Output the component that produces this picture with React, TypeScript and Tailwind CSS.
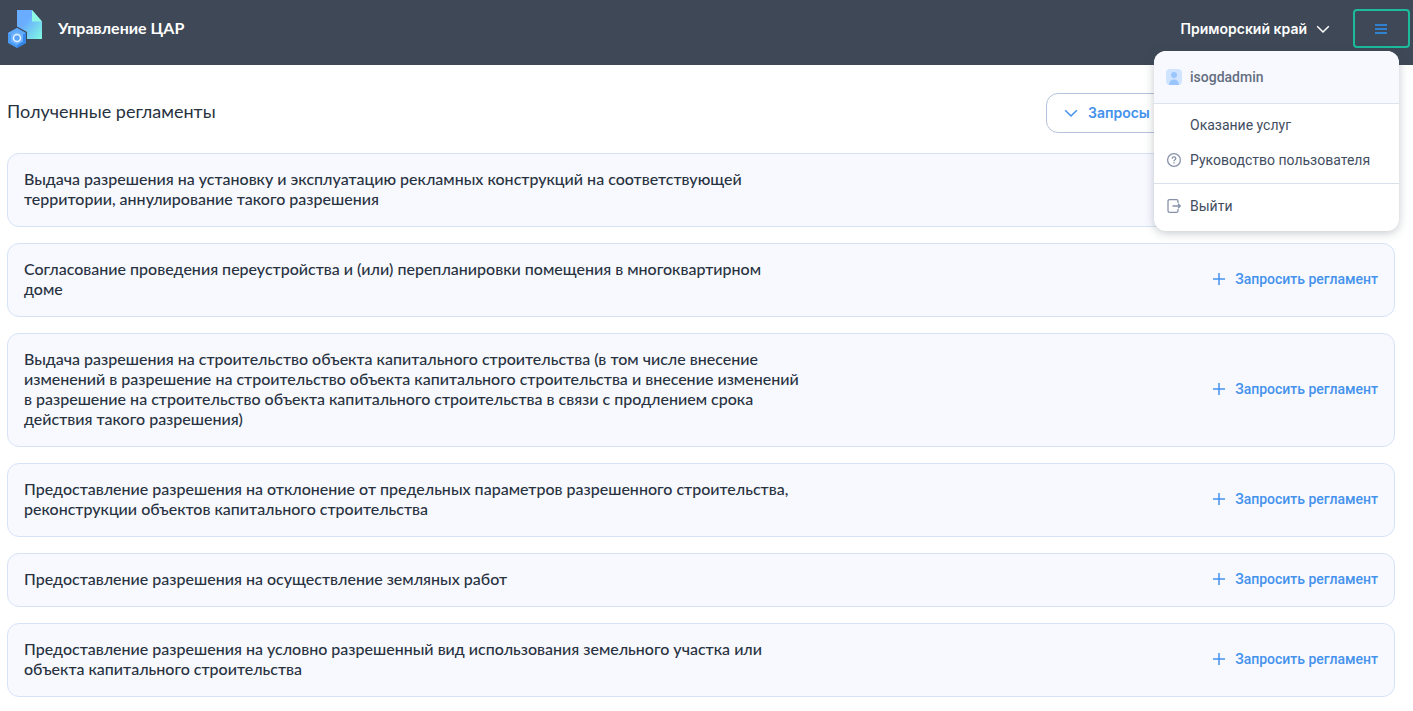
import React from 'react'

const regulations = [
    "Выдача разрешения на установку и эксплуатацию рекламных конструкций на соответствующей территории, аннулирование такого разрешения",
    "Согласование проведения переустройства и (или) перепланировки помещения в многоквартирном доме",
    "Выдача разрешения на строительство объекта капитального строительства (в том числе внесение изменений в разрешение на строительство объекта капитального строительства и внесение изменений в разрешение на строительство объекта капитального строительства в связи с продлением срока действия такого разрешения)",
    "Предоставление разрешения на отклонение от предельных параметров разрешенного строительства, реконструкции объектов капитального строительства",
    "Предоставление разрешения на осуществление земляных работ",
    "Предоставление разрешения на условно разрешенный вид использования земельного участка или объекта капитального строительства",
]

function Logo() {
    return (
        <svg width="36" height="40" viewBox="0 0 36 40" aria-hidden="true">
            <defs>
                <linearGradient id="doc" x1="0.35" y1="0.4" x2="1" y2="1">
                    <stop offset="0" stopColor="#6aacff" />
                    <stop offset="1" stopColor="#80fbe0" />
                </linearGradient>
            </defs>
            <path d="M9 2h15l10 11.500v17.500H9z" fill="url(#doc)" />
            <path d="M24 2l10 11.500H24z" fill="#8ff8e4" />
            <path d="M9 18.500l10 5.500v12l-10 3-10-5v-10z" fill="#3e4857" />
            <path d="M9 20l9 5v10l-9 5-9-5V25z" fill="#4a9bf5" />
            <path d="M9 20l9 5-9 5-9-5z" fill="#5fa9f8" />
            <path d="M9 30l9-5v10l-9 5z" fill="#3586e8" />
            <path d="M9 23l6 3.500v7L9 37l-6-3.500v-7z" fill="#6cb2ff" />
            <circle cx="9" cy="30" r="3.500" fill="#5aa5fa" stroke="#e8f4ff" strokeWidth="1.500" />
        </svg>
    )
}

function ChevronIcon() {
    return (
        <svg width="14" height="14" viewBox="0 0 14 14" fill="none" stroke="currentColor" strokeWidth="1.500" aria-hidden="true">
            <path d="M1.200 4.200L7 10l5.800-5.800" />
        </svg>
    )
}

function PlusIcon() {
    return (
        <svg width="12" height="12" viewBox="0 0 12 12" stroke="currentColor" strokeWidth="1.500" aria-hidden="true">
            <path d="M6 0v12M0 6h12" />
        </svg>
    )
}

function UserIcon() {
    return (
        <svg width="16" height="16" viewBox="0 0 16 16" aria-hidden="true">
            <rect width="16" height="16" rx="4" fill="#d1e4ff" />
            <circle cx="8" cy="6" r="3" fill="#9bc5ff" />
            <path d="M3 16c0-3.500 2-5.500 5-5.500s5 2 5 5.500z" fill="#9bc5ff" />
        </svg>
    )
}

function HelpIcon() {
    return (
        <svg width="16" height="16" viewBox="0 0 16 16" fill="none" stroke="#8792a8" strokeWidth="1.300" aria-hidden="true">
            <circle cx="8" cy="8" r="6.400" />
            <path d="M6.200 6.700c0-1.100.8-1.800 1.800-1.800s1.800.7 1.800 1.600c0 1.300-1.800 1.300-1.800 2.700" />
            <path d="M8 10.200v1.300" />
        </svg>
    )
}

function ExitIcon() {
    return (
        <svg width="16" height="16" viewBox="0 0 16 16" fill="none" stroke="#8792a8" strokeWidth="1.300" aria-hidden="true">
            <path d="M12 5V3.200C12 2.200 11.400 1.600 10.400 1.600H3.600C2.600 1.600 2 2.200 2 3.200v9.600c0 1 .6 1.600 1.600 1.600h6.800c1 0 1.600-.6 1.600-1.600V11" />
            <path d="M6.500 8H14M12 5.800L14.300 8 12 10.200" />
        </svg>
    )
}

function UserMenu() {
    return (
        <nav className="absolute right-[14px] top-[51px] z-10 w-[245px] overflow-hidden rounded-xl bg-white font-[Roboto,sans-serif] text-sm text-[#424d5f] shadow-[0_2px_10px_rgba(60,75,90,0.3)]">
            <div className="flex h-[53px] items-center gap-2 border-b border-[#dde3ec] bg-[#f8f9ff] px-3 pb-px font-medium text-[#646e7f]">
                <UserIcon />
                isogdadmin
            </div>
            <ul className="border-b border-[#d9e0eb] pb-[6px] pt-[3px]">
                <li>
                    <a href="#services" className="flex h-[35px] items-center pl-9">Оказание услуг</a>
                </li>
                <li>
                    <a href="#guide" className="flex h-[35px] items-center gap-2 px-3">
                        <HelpIcon />
                        Руководство пользователя
                    </a>
                </li>
            </ul>
            <a href="#logout" className="flex h-[47px] items-center gap-2 px-3 pb-1">
                <ExitIcon />
                Выйти
            </a>
        </nav>
    )
}

export default function App() {
    return (
        <div className="relative min-h-screen bg-white font-[Lato,sans-serif] text-[#28323f]">
            <header className="flex h-[65px] items-start justify-between bg-[#3e4857] pl-2 pr-[3px] pt-2 text-white">
                <div className="flex h-10 items-center gap-[14px]">
                    <Logo />
                    <span className="font-bold">Управление ЦАР</span>
                </div>
                <div className="flex h-[41px] items-center gap-[23px]">
                    <button type="button" className="flex items-center gap-[9px] pt-px font-[Inter,sans-serif] text-sm font-semibold">
                        Приморский край
                        <ChevronIcon />
                    </button>
                    <button type="button" aria-label="Меню" className="flex h-[39px] w-[57px] items-center justify-center rounded-sm border-2 border-[#1abc9c] pr-px text-[#3182ce]">
                        <svg width="12" height="11" viewBox="0 0 12 11" fill="currentColor" shapeRendering="crispEdges" aria-hidden="true">
                            <path d="M0 1h12v2H0zM0 5h12v2H0zM0 9h12v2H0z" />
                        </svg>
                    </button>
                </div>
            </header>
            <UserMenu />
            <main className="pb-[14px] pl-[7px] pr-[18px] pt-7">
                <div className="mb-5 flex items-center justify-between">
                    <h1 className="pb-1 text-lg">Полученные регламенты</h1>
                    <button type="button" className="flex h-10 w-[349px] items-center gap-[10px] rounded-xl border border-[#b5c3dc] px-[17px] font-[Inter,sans-serif] text-sm font-semibold text-[#4592ec]">
                        <ChevronIcon />
                        Запросы
                    </button>
                </div>
                <ul className="flex flex-col gap-4">
                    {regulations.map((name) => (
                        <li key={name} className="flex items-center justify-between rounded-xl border border-[#d6e3f7] bg-[#f8f9ff] px-4 pb-[17px] pt-[15px]">
                            <p className="max-w-[778px] text-base leading-5 font-medium">{name}</p>
                            <button type="button" className="flex shrink-0 items-center gap-[10px] font-[Roboto,sans-serif] text-sm font-medium text-[#4592ec]">
                                <PlusIcon />
                                Запросить регламент
                            </button>
                        </li>
                    ))}
                </ul>
            </main>
        </div>
    )
}
